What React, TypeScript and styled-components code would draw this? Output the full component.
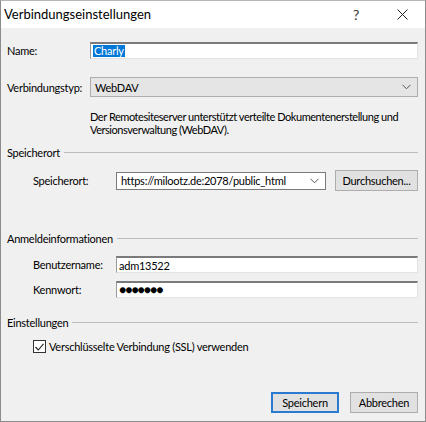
import styled, { createGlobalStyle } from 'styled-components'

const GlobalStyle = createGlobalStyle`
  html, body {
    margin: 0;
    padding: 0;
    background: #ffffff;
  }
  * {
    box-sizing: border-box;
  }
`

const Window = styled.div`
  width: 426px;
  height: 422px;
  display: flex;
  flex-direction: column;
  background: #f0f0f0;
  border: 1px solid #8c8c8c;
  border-top-color: #b5b5b5;
  font-family: Lato, 'Noto Sans', sans-serif;
  font-size: 11px;
  letter-spacing: -0.25px;
  color: #000;
`

const TitleBar = styled.div`
  height: 27px;
  flex-shrink: 0;
  display: flex;
  align-items: center;
  background: #ffffff;
  padding-left: 3px;
`

const Title = styled.div`
  flex: 1;
  font-size: 13px;
  letter-spacing: 0;
  margin-top: -2px;
`

const TitleButton = styled.div<{ $w: number }>`
  width: ${({ $w }) => $w}px;
  height: 27px;
  display: flex;
  align-items: center;
  justify-content: center;
  font-size: 14px;
  color: #333;
`

const Body = styled.div`
  flex: 1;
  display: flex;
  flex-direction: column;
  padding: 0 7px 8px 6px;
`

const Row = styled.div<{ $top: number; $indent?: number; $label: number }>`
  display: flex;
  align-items: center;
  margin-top: ${({ $top }) => $top}px;
  padding-left: ${({ $indent }) => $indent ?? 0}px;

  > label {
    width: ${({ $label }) => $label}px;
    flex-shrink: 0;
  }
`

const TextInput = styled.div<{ $h?: number }>`
  flex: 1;
  height: ${({ $h }) => $h ?? 17}px;
  display: flex;
  align-items: center;
  padding-left: 2px;
  background: #fff;
  border: 1px solid #e3e3e3;
  border-top: 2px solid #7a7a7a;
  border-left: 1px solid #9a9a9a;
  white-space: nowrap;
`

const Selected = styled.span`
  background: #0078d7;
  color: #fff;
  padding: 0 1px;
  line-height: 12px;
`

const Dots = styled.span`
  font-size: 12px;
  letter-spacing: -1px;
  margin-top: -1px;
`

const Select = styled.div<{ $flat?: boolean }>`
  flex: 1;
  height: ${({ $flat }) => ($flat ? 18 : 20)}px;
  display: flex;
  align-items: center;
  justify-content: space-between;
  padding: 0 6px 0 4px;
  background: ${({ $flat }) => ($flat ? '#fff' : '#e5e5e5')};
  border: 1px solid ${({ $flat }) => ($flat ? '#7a7a7a' : '#adadad')};
  white-space: nowrap;
`

const Description = styled.p`
  margin: 13px 0 0 83px;
  line-height: 13px;
  letter-spacing: -0.45px;
  white-space: nowrap;
`

const GroupHeader = styled.div<{ $top: number }>`
  display: flex;
  align-items: center;
  gap: 4px;
  margin-top: ${({ $top }) => $top}px;
  line-height: 13px;

  &::after {
    content: '';
    flex: 1;
    height: 1px;
    background: #bdbdbd;
  }
`

const Button = styled.button<{ $default?: boolean }>`
  height: 21px;
  width: 68px;
  padding: 0;
  font: inherit;
  letter-spacing: inherit;
  color: #000;
  background: #e1e1e1;
  border: ${({ $default }) => ($default ? '2px solid #2a7bd0' : '1px solid #adadad')};
`

const BrowseButton = styled(Button)`
  width: 83px;
  margin-left: 9px;
`

const CheckRow = styled.label`
  display: flex;
  align-items: center;
  gap: 3px;
  margin: 11px 0 0 26px;
`

const CheckBox = styled.span`
  width: 13px;
  height: 13px;
  border: 1px solid #333;
  background: #fff;
  display: flex;
  align-items: center;
  justify-content: center;
`

const Footer = styled.div`
  margin-top: auto;
  display: flex;
  justify-content: flex-end;
  gap: 11px;
`

const Chevron = () => (
  <svg width="9" height="6" viewBox="0 0 9 6">
    <path d="M0.5 0.8 L4.5 4.8 L8.5 0.8" fill="none" stroke="#555" strokeWidth="1" />
  </svg>
)

export default function App() {
  return (
    <>
      <GlobalStyle />
      <Window>
        <TitleBar>
          <Title>Verbindungseinstellungen</Title>
          <TitleButton $w={46}>?</TitleButton>
          <TitleButton $w={46}>
            <svg width="11" height="11" viewBox="0 0 11 11">
              <path d="M0.5 0.5 L10.5 10.5 M10.5 0.5 L0.5 10.5" stroke="#222" strokeWidth="1" />
            </svg>
          </TitleButton>
        </TitleBar>
        <Body>
          <Row $top={14} $label={83}>
            <label>Name:</label>
            <TextInput>
              <Selected>Charly</Selected>
            </TextInput>
          </Row>
          <Row $top={18} $label={83}>
            <label>Verbindungstyp:</label>
            <Select>
              <span>WebDAV</span>
              <Chevron />
            </Select>
          </Row>
          <Description>
            Der Remotesiteserver unterstützt verteilte Dokumentenerstellung und
            <br />
            Versionsverwaltung (WebDAV).
          </Description>
          <GroupHeader $top={10}>Speicherort</GroupHeader>
          <Row $top={11} $indent={26} $label={83}>
            <label>Speicherort:</label>
            <Select $flat style={{ flex: '0 0 210px' }}>
              <span>https://milootz.de:2078/public_html</span>
              <Chevron />
            </Select>
            <BrowseButton>Durchsuchen...</BrowseButton>
          </Row>
          <GroupHeader $top={41}>Anmeldeinformationen</GroupHeader>
          <Row $top={11} $indent={26} $label={83}>
            <label>Benutzername:</label>
            <TextInput>adm13522</TextInput>
          </Row>
          <Row $top={8} $indent={26} $label={83}>
            <label>Kennwort:</label>
            <TextInput>
              <Dots>●●●●●●●</Dots>
            </TextInput>
          </Row>
          <GroupHeader $top={18}>Einstellungen</GroupHeader>
          <CheckRow>
            <CheckBox>
              <svg width="9" height="8" viewBox="0 0 9 8">
                <path d="M0.5 4 L3.3 7 L8.5 0.8" fill="none" stroke="#222" strokeWidth="1.1" />
              </svg>
            </CheckBox>
            Verschlüsselte Verbindung (SSL) verwenden
          </CheckRow>
          <Footer>
            <Button $default>Speichern</Button>
            <Button>Abbrechen</Button>
          </Footer>
        </Body>
      </Window>
    </>
  )
}
